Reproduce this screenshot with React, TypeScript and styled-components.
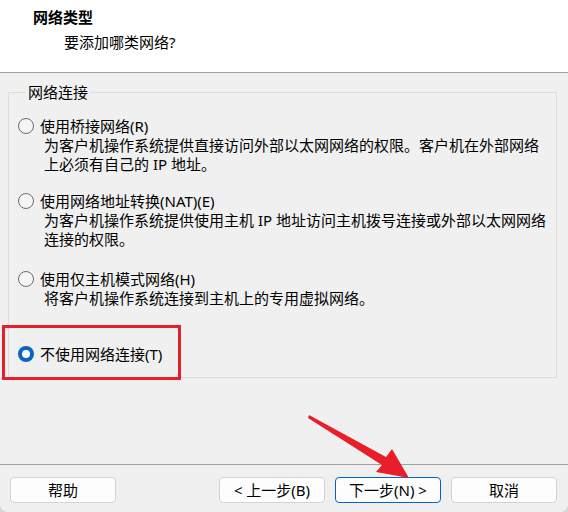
import * as React from 'react'
import styled, { createGlobalStyle } from 'styled-components'

const GlobalStyle = createGlobalStyle`
  html, body {
    margin: 0;
    padding: 0;
    background: #d6d6d6;
  }
  * {
    box-sizing: border-box;
  }
`

const FONT = `"Noto Sans", "Noto Sans CJK SC", sans-serif`

const Window = styled.div`
  position: relative;
  width: 568px;
  height: 512px;
  display: flex;
  flex-direction: column;
  background: #f0f0f0;
  border-radius: 0 0 8px 8px;
  overflow: hidden;
  font-family: ${FONT};
  font-size: 15px;
  color: #000;
`

const Header = styled.div`
  height: 73px;
  flex: none;
  background: #fff;
  border-bottom: 1px solid #a0a0a0;
  padding: 6px 0 0 33px;
`

const Title = styled.div`
  font-weight: 700;
  line-height: 22px;
`

const Subtitle = styled.div`
  padding-left: 31px;
  line-height: 22px;
  margin-top: 3px;
`

const Group = styled.fieldset`
  margin: 9px 11px 0 8px;
  padding: 14px 10px 13px 9px;
  border: 1px solid #dcdcdc;
  border-radius: 0;
  min-width: 0;
`

const Legend = styled.legend`
  padding: 0 2px;
  margin-left: 8px;
  line-height: 20px;
`

const Option = styled.div<{ $gap: number }>`
  margin-top: ${p => p.$gap}px;
`

const OptionLabel = styled.div`
  display: flex;
  align-items: center;
  gap: 6px;
  line-height: 20px;
`

const Radio = styled.span<{ $checked?: boolean }>`
  flex: none;
  width: 16px;
  height: 16px;
  border-radius: 50%;
  display: flex;
  align-items: center;
  justify-content: center;
  border: ${p => (p.$checked ? 'none' : '1px solid #6b6b6b')};
  background: ${p => (p.$checked ? '#0a64c2' : '#f5f5f5')};

  &::after {
    content: '';
    display: ${p => (p.$checked ? 'block' : 'none')};
    width: 8px;
    height: 8px;
    border-radius: 50%;
    background: #fff;
  }
`

const Desc = styled.div`
  padding-left: 26px;
  line-height: 19px;
`

const Spacer = styled.div`
  flex: 1;
`

const Footer = styled.div`
  flex: none;
  height: 48px;
  border-top: 1px solid #a0a0a0;
  display: flex;
  align-items: flex-start;
  padding: 12px 11px 0 10px;
  gap: 10px;
`

const Button = styled.button<{ $default?: boolean }>`
  width: 106px;
  height: 26px;
  border-radius: 4px;
  background: #fdfdfd;
  border: 1px solid ${p => (p.$default ? '#0067c0' : '#d3d3d3')};
  font-family: ${FONT};
  font-size: 15px;
  color: #000;
  padding: 0;
  line-height: 22px;
`

const Push = styled.div`
  flex: 1;
`

const Highlight = styled.div`
  position: absolute;
  left: 2px;
  top: 325px;
  width: 179px;
  height: 55px;
  border: 3px solid #e81e2a;
  pointer-events: none;
`

const ArrowLayer = styled.svg`
  position: absolute;
  left: 0;
  top: 0;
  pointer-events: none;
`

interface IOption {
  label: string
  lines: string[]
  gap: number
  checked?: boolean
}

const options: IOption[] = [
  {
    label: '使用桥接网络(R)',
    lines: ['为客户机操作系统提供直接访问外部以太网网络的权限。客户机在外部网络', '上必须有自己的 IP 地址。'],
    gap: 0,
  },
  {
    label: '使用网络地址转换(NAT)(E)',
    lines: ['为客户机操作系统提供使用主机 IP 地址访问主机拨号连接或外部以太网网络', '连接的权限。'],
    gap: 17,
  },
  {
    label: '使用仅主机模式网络(H)',
    lines: ['将客户机操作系统连接到主机上的专用虚拟网络。'],
    gap: 20,
  },
  {
    label: '不使用网络连接(T)',
    lines: [],
    gap: 36,
    checked: true,
  },
]

const App: React.FC = () => (
  <>
    <GlobalStyle />
    <Window>
      <Header>
        <Title>网络类型</Title>
        <Subtitle>要添加哪类网络?</Subtitle>
      </Header>

      <Group>
        <Legend>网络连接</Legend>
        {options.map((opt, i) => (
          <Option key={i} $gap={opt.gap}>
            <OptionLabel>
              <Radio $checked={opt.checked} />
              {opt.label}
            </OptionLabel>
            {opt.lines.map((line, j) => <Desc key={j}>{line}</Desc>)}
          </Option>
        ))}
      </Group>

      <Spacer />

      <Footer>
        <Button>帮助</Button>
        <Push />
        <Button>&lt; 上一步(B)</Button>
        <Button $default>下一步(N) &gt;</Button>
        <Button>取消</Button>
      </Footer>

      <Highlight />
      <ArrowLayer width="568" height="512" viewBox="0 0 568 512">
        <polygon
          points="309,415 386,457 392,449 409,478 376,472 382,465 308,418"
          fill="#e81e2a"
        />
      </ArrowLayer>
    </Window>
  </>
)

export default App
